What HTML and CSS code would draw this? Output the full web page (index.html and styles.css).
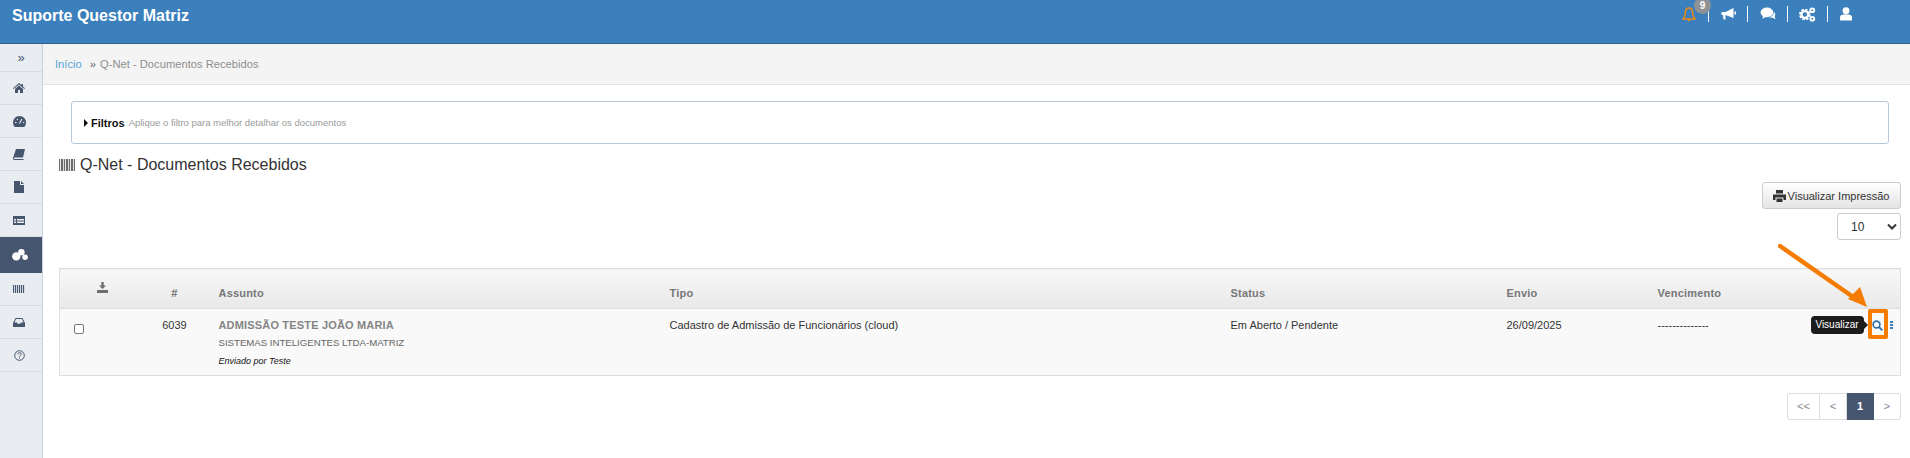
FILE: index.html
```html
<!DOCTYPE html>
<html lang="pt-BR">
<head>
<meta charset="utf-8">
<title>Q-Net - Documentos Recebidos</title>
<link rel="stylesheet" href="styles.css">
</head>
<body>
<header class="topbar">
  <div class="brand">Suporte Questor Matriz</div>
  <nav class="top-icons">
    <span class="top-item bell">
      <svg width="14" height="17" viewBox="0 0 14 16"><path d="M7 1.500C4.600 1.500 3.400 3.400 3.400 6c0 3.400-.8 5-2.200 6.400h11.600C11.400 11 10.600 9.400 10.600 6c0-2.600-1.200-4.500-3.600-4.500z" fill="none" stroke="#f08a14" stroke-width="1.500"/><path d="M5.500 13.200c.2 1 .8 1.600 1.500 1.600s1.300-.6 1.500-1.600z" fill="#f08a14"/></svg>
      <span class="badge">9</span>
    </span>
    <span class="top-item">
      <svg width="17" height="14" viewBox="0 0 16 14"><path d="M1 5h4l8-4v10L5 8v4.500H3L2.500 8H1zM14 4.500h1.500v3H14z" fill="#fff"/></svg>
    </span>
    <span class="top-item wide">
      <svg width="16" height="14" viewBox="0 0 15 13"><ellipse cx="6.500" cy="5" rx="6" ry="4.500" fill="#fff"/><path d="M3 8l-1 3 4-2z" fill="#fff"/><path d="M13 4.500c1.300 1 1.700 2.800.8 4.200l.7 2.800-3-1.700c-1 .2-2 .1-3-.3 2.800-.2 4.800-2.500 4.500-5z" fill="#fff"/></svg>
    </span>
    <span class="top-item wide">
      <svg width="17" height="15" viewBox="0 0 16 14"><circle cx="5.500" cy="7" r="4" fill="none" stroke="#fff" stroke-width="3" stroke-dasharray="2 1.100"/><circle cx="5.500" cy="7" r="3.200" fill="none" stroke="#fff" stroke-width="2"/><circle cx="12.500" cy="3" r="1.800" fill="none" stroke="#fff" stroke-width="1.800"/><circle cx="12.500" cy="11" r="1.800" fill="none" stroke="#fff" stroke-width="1.800"/></svg>
    </span>
    <span class="top-item last">
      <svg width="12" height="14" viewBox="0 0 11 13"><circle cx="5.500" cy="3.500" r="3.200" fill="#fff"/><path d="M0 12.500V9.500C0 7.800 1.500 7 3 7h5c1.500 0 3 .8 3 2.500v3z" fill="#fff"/></svg>
    </span>
  </nav>
</header>

<div class="shell">
  <aside class="sidebar">
    <div class="side-item toggle"><span class="chev">»</span></div>
    <div class="side-item">
      <svg width="12" height="10" viewBox="0 0 12 10"><path d="M6 0L0 5.200l.7.800L6 1.500 11.300 6l.7-.8-2-1.700V1H8.500v1.100zM2 6v4h3V7h2v3h3V6L6 2.500z" fill="#47566f"/></svg>
    </div>
    <div class="side-item">
      <svg width="13" height="11" viewBox="0 0 13 11"><path d="M6.500 0C2.900 0 0 2.900 0 6.500c0 1.700.6 3.200 1.700 4.400h9.600c1.100-1.200 1.700-2.700 1.700-4.400C13 2.900 10.100 0 6.500 0z" fill="#47566f"/><path d="M6.500 7.500L9 3M2 6.500h1.500M10 6.500h1.200M4 3l.8.800" stroke="#eaeef2" stroke-width="1.100" fill="none"/></svg>
    </div>
    <div class="side-item">
      <svg width="12" height="11" viewBox="0 0 12 11"><path d="M3 0h9L10 8.500H2C1.300 8.500 1 9 1 9.300s.3.700 1 .7h8.500v1H1.500C.5 11 0 10.200 0 9.300 0 8.900.1 8.500.3 8.100z" fill="#47566f"/></svg>
    </div>
    <div class="side-item">
      <svg width="10" height="12" viewBox="0 0 10 12"><path d="M0 0h6v4h4v8H0zM7 0l3 3H7z" fill="#47566f"/></svg>
    </div>
    <div class="side-item">
      <svg width="12" height="9" viewBox="0 0 12 9"><path d="M0 0h12v9H0zM1 3v1.500h2V3zm3 0v1.500h7V3zM1 5.500V7h2V5.500zm3 0V7h7V5.500z" fill="#47566f" fill-rule="evenodd"/></svg>
    </div>
    <div class="side-item active">
      <svg width="16" height="12" viewBox="0 0 17 13"><circle cx="4.500" cy="8" r="4.500" fill="#fff"/><circle cx="10" cy="3.500" r="3.500" fill="#fff"/><circle cx="14" cy="9" r="3" fill="#fff"/></svg>
    </div>
    <div class="side-item">
      <span class="barcode small"></span>
    </div>
    <div class="side-item">
      <svg width="12" height="9" viewBox="0 0 12 9"><path d="M2.500 0h7L12 5v4H0V5zM3 1L1.500 4.500H4l.7 1.200h2.600L8 4.500h2.500L9 1z" fill="#47566f" fill-rule="evenodd"/></svg>
    </div>
    <div class="side-item">
      <svg width="11" height="11" viewBox="0 0 11 11"><circle cx="5.500" cy="5.500" r="4.800" fill="none" stroke="#47566f" stroke-width="1"/><path d="M3.800 4.300c0-2.200 3.500-2.200 3.500-.2 0 1.300-1.800 1.300-1.800 2.600" fill="none" stroke="#47566f" stroke-width="1"/><path d="M5 7.600h1v1H5z" fill="#47566f"/></svg>
    </div>
  </aside>

  <main class="content">
    <div class="crumbs">
      <a class="crumb-link" href="#">Início</a>
      <span class="crumb-sep">»</span>
      <span class="crumb-current">Q-Net - Documentos Recebidos</span>
    </div>

    <div class="page">
      <section class="filter-box">
        <span class="caret"></span>
        <strong class="filter-title">Filtros</strong>
        <span class="filter-hint">Aplique o filtro para melhor detalhar os documentos</span>
      </section>

      <h1 class="page-title"><span class="barcode"></span>Q-Net - Documentos Recebidos</h1>

      <div class="tools">
        <button class="print-btn" type="button">
          <svg width="13" height="12" viewBox="0 0 13 12"><path d="M3 0h7v3.500H3zM0 4.500h13V10h-2.500V7.500h-8V10H0zM3.500 8.500h6V12h-6z" fill="#333"/></svg>
          Visualizar Impressão
        </button>
        <div class="page-size"><span>10</span>
          <svg width="10" height="7" viewBox="0 0 10 7"><path d="M1 1.500l4 4 4-4" fill="none" stroke="#333" stroke-width="2"/></svg>
        </div>
      </div>

      <table class="docs">
        <colgroup>
          <col class="c-check"><col class="c-num"><col class="c-subject"><col class="c-type"><col class="c-status"><col class="c-sent"><col class="c-due"><col class="c-actions">
        </colgroup>
        <thead>
          <tr>
            <th class="stamp-cell">
              <svg width="11" height="11" viewBox="0 0 11 11"><path d="M4.300 0h2.400v3.500H9L5.500 7 2 3.500h2.300zM0 8h11v3H0z" fill="#6e6e6e"/></svg>
            </th>
            <th class="num-cell">#</th>
            <th>Assunto</th>
            <th>Tipo</th>
            <th>Status</th>
            <th>Envio</th>
            <th>Vencimento</th>
            <th></th>
          </tr>
        </thead>
        <tbody>
          <tr>
            <td class="check-cell"><span class="checkbox"></span></td>
            <td class="num-cell">6039</td>
            <td class="subject-cell">
              <div class="subject">ADMISSÃO TESTE JOÃO MARIA</div>
              <div class="company">SISTEMAS INTELIGENTES LTDA-MATRIZ</div>
              <div class="sender">Enviado por Teste</div>
            </td>
            <td>Cadastro de Admissão de Funcionários (cloud)</td>
            <td>Em Aberto / Pendente</td>
            <td>26/09/2025</td>
            <td>--------------</td>
            <td class="actions-cell">
              <span class="tooltip">Visualizar</span>
              <span class="highlight">
                <svg width="11" height="11" viewBox="0 0 11 11"><circle cx="4.500" cy="4.500" r="3.400" fill="none" stroke="#2f6fa8" stroke-width="1.600"/><path d="M7 7l3.300 3.300" stroke="#2f6fa8" stroke-width="1.800"/></svg>
              </span>
              <span class="kebab"><i></i><i></i><i></i></span>
            </td>
          </tr>
        </tbody>
      </table>

      <nav class="pager">
        <a class="pg first">&lt;&lt;</a><a class="pg prev">&lt;</a><a class="pg current">1</a><a class="pg next">&gt;</a>
      </nav>
    </div>
  </main>
</div>

<svg class="arrow" width="110" height="80" viewBox="0 0 110 80">
  <path d="M2 2L78 55" stroke="#f57c00" stroke-width="4.500" fill="none" stroke-linecap="round"/>
  <path d="M89 63L70 55l12-12z" fill="#f57c00"/>
</svg>
</body>
</html>
```
FILE: styles.css
```css
* { box-sizing: border-box; }
html, body { margin: 0; height: 100%; }
body {
  font-family: "Liberation Sans", Arial, sans-serif;
  font-size: 11px;
  color: #333;
  background: #fff;
  overflow: hidden;
  position: relative;
}

.topbar {
  height: 44px;
  background: #3b7fbd;
  border-bottom: 1px solid #2e6491;
  display: flex;
  justify-content: space-between;
  align-items: flex-start;
  padding: 7px 0 0 12px;
  overflow: hidden;
}
.brand { font-size: 16px; font-weight: 700; color: #fff; line-height: 17px; }
.top-icons { display: flex; align-items: flex-start; margin-top: -1px; margin-right: 44px; }
.top-item {
  width: 39px;
  height: 16px;
  border-right: 1px solid #fff;
  display: flex;
  align-items: center;
  justify-content: center;
  position: relative;
}
.top-item.wide { width: 40px; }
.top-item.last { border-right: 0; width: 38px; justify-content: flex-start; padding-left: 12px; }
.top-item.bell { width: 28px; justify-content: flex-start; padding-left: 1px; }
.badge {
  position: absolute;
  left: 13px;
  top: -9px;
  width: 17px;
  height: 17px;
  border-radius: 50%;
  background: #8f9295;
  color: #fff;
  font-size: 10px;
  font-weight: 700;
  line-height: 17px;
  text-align: center;
}

.shell { display: flex; height: calc(100% - 44px); }
.sidebar {
  width: 43px;
  flex: none;
  background: #e9edf1;
  border-right: 1px solid #c4d2e0;
}
.side-item {
  height: 33px;
  display: flex;
  align-items: center;
  justify-content: center;
  border-bottom: 1px solid #d7dde3;
  padding-right: 4px;
}
.side-item.toggle { height: 28px; padding-right: 0; }
.chev { font-size: 13px; color: #47566f; line-height: 13px; }
.side-item.active { height: 36px; background: #47566f; border-bottom: 0; padding-right: 2px; }

.barcode {
  display: inline-block;
  width: 16px;
  height: 12px;
  background: repeating-linear-gradient(90deg, #6b6b6b 0 1px, #e8e8e8 1px 2px, #6b6b6b 2px 4px, #ddd 4px 5px);
}
.barcode.small { width: 12px; height: 8px; background: repeating-linear-gradient(90deg, #47566f 0 1px, #cfd6de 1px 2px); }

.content { flex: 1; min-width: 0; }
.crumbs {
  height: 41px;
  background: #f4f4f4;
  border-bottom: 1px solid #dfe3e7;
  padding: 14px 0 0 12px;
  line-height: 13px;
  font-size: 11.200px;
  color: #8f8f8f;
  display: flex;
}
.crumb-link { color: #5aa5d6; text-decoration: none; }
.crumb-sep { margin: 0 4px 0 8px; color: #666; }

.page { padding: 16px 9px 0 16px; }
.filter-box {
  margin-left: 12px;
  margin-right: 12px;
  height: 43px;
  border: 1px solid #b9c6d6;
  border-radius: 3px;
  display: flex;
  align-items: center;
  padding-left: 12px;
  background: #fff;
}
.caret {
  width: 0; height: 0;
  border-left: 4px solid #111;
  border-top: 4px solid transparent;
  border-bottom: 4px solid transparent;
  margin-right: 3px;
}
.filter-title { font-size: 11px; color: #111; margin-right: 4px; }
.filter-hint { font-size: 9.500px; color: #9a9a9a; }

.page-title {
  margin: 12px 0 0;
  font-size: 16px;
  font-weight: 400;
  color: #333;
  line-height: 18px;
  display: flex;
  align-items: center;
  gap: 5px;
}
.tools { display: flex; flex-direction: column; align-items: flex-end; gap: 4px; margin-top: 8px; }
.print-btn {
  width: 139px;
  height: 27px;
  border: 1px solid #ccc;
  border-radius: 3px;
  background: linear-gradient(#fff, #e4e4e4);
  font: 11px "Liberation Sans", Arial, sans-serif;
  color: #333;
  display: flex;
  align-items: center;
  justify-content: center;
  gap: 2px;
  padding: 0 1px 0 0;
}
.page-size {
  width: 64px;
  height: 27px;
  border: 1px solid #ccc;
  border-radius: 3px;
  display: flex;
  align-items: center;
  justify-content: space-between;
  padding: 0 3px 0 13px;
  font-size: 12px;
}

.docs {
  width: 100%;
  margin-top: 28px;
  border-collapse: collapse;
  table-layout: fixed;
  border: 1px solid #dcdfe2;
}
.c-check { width: 85px; }
.c-num { width: 74px; }
.c-subject { width: 451px; }
.c-type { width: 561px; }
.c-status { width: 276px; }
.c-sent { width: 151px; }
.c-due { width: 140px; }
.docs th {
  height: 40px;
  background: linear-gradient(#f8f8f8, #e8e8e8);
  border-bottom: 1px solid #dcdfe2;
  text-align: left;
  font-size: 11px;
  font-weight: 700;
  color: #777;
  padding: 8px 0 0;
  letter-spacing: .2px;
}
.docs th.stamp-cell { padding: 0 0 1px 37px; }
.docs th.num-cell, .docs td.num-cell { text-align: center; padding-right: 14px; }
.docs td {
  height: 67px;
  background: #f9f9f9;
  vertical-align: top;
  padding: 9px 0 0;
  font-size: 11px;
  color: #333;
  line-height: 14px;
}
.checkbox {
  display: block;
  width: 10px;
  height: 10px;
  border: 1px solid #777;
  border-radius: 2px;
  background: #fff;
  margin: 6px 0 0 14px;
}
.subject { font-weight: 700; font-size: 11px; color: #858585; letter-spacing: .17px; }
.company { font-size: 9.650px; color: #666; margin-top: 4px; }
.sender { font-size: 9px; font-style: italic; color: #111; margin-top: 4px; }
.docs td.actions-cell { padding: 0; position: relative; }
.tooltip {
  position: absolute;
  left: 13px;
  top: 7px;
  width: 53px;
  height: 18px;
  background: #1c1c1c;
  color: #fff;
  border-radius: 4px;
  font-size: 10px;
  line-height: 18px;
  text-align: center;
}
.tooltip::after {
  content: "";
  position: absolute;
  right: -4px;
  top: 5px;
  border-left: 4px solid #1c1c1c;
  border-top: 4px solid transparent;
  border-bottom: 4px solid transparent;
}
.highlight {
  position: absolute;
  left: 70px;
  top: 0;
  width: 20px;
  height: 30px;
  border: 4px solid #f57c00;
  border-radius: 2px;
  display: flex;
  justify-content: center;
  padding-top: 7px;
}
.kebab { position: absolute; left: 92px; top: 12px; display: flex; flex-direction: column; gap: 1px; }
.kebab i { width: 3px; height: 2px; background: #3b7fbd; }

.pager { display: flex; justify-content: flex-end; margin-top: 17px; }
.pg {
  height: 27px;
  border: 1px solid #ddd;
  border-left: 0;
  font-size: 11px;
  line-height: 25px;
  text-align: center;
  color: #888;
  width: 27px;
  background: #fff;
}
.pg.first { width: 33px; border-left: 1px solid #ddd; border-radius: 3px 0 0 3px; }
.pg.current { background: #47566f; color: #fff; font-weight: 700; border-color: #47566f; }
.pg.next { border-radius: 0 3px 3px 0; }

.arrow { position: absolute; left: 1778px; top: 244px; }
```
